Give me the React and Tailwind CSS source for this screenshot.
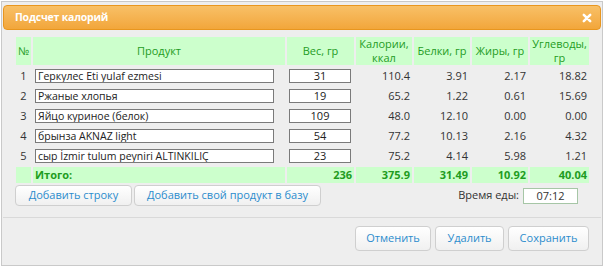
import React from "react";

const rows = [
  { n: 1, name: "Геркулес Eti yulaf ezmesi", w: "31", k: "110.4", b: "3.91", j: "2.17", u: "18.82" },
  { n: 2, name: "Ржаные хлопья", w: "19", k: "65.2", b: "1.22", j: "0.61", u: "15.69" },
  { n: 3, name: "Яйцо куриное (белок)", w: "109", k: "48.0", b: "12.10", j: "0.00", u: "0.00" },
  { n: 4, name: "брынза AKNAZ light", w: "54", k: "77.2", b: "10.13", j: "2.16", u: "4.32" },
  { n: 5, name: "сыр İzmir tulum peyniri ALTINKILIÇ", w: "23", k: "75.2", b: "4.14", j: "5.98", u: "1.21" },
];

const hdr = "bg-[#ccffcc] text-[#1f9c1f] text-[11px] leading-[14px] flex items-center justify-center text-center h-[28px]";
const num = "h-[18px] flex items-center justify-end pr-[2px] text-[11px] text-[#333]";
const tot = "h-[16px] bg-[#ccffcc] flex items-center justify-end pr-[2px] text-[11px] font-bold text-[#1f9c1f]";
const btn = "h-full rounded-[4px] border border-[#cfcfcf] bg-gradient-to-b from-white to-[#f0f0f0] text-[#2b8ccd] text-[11px] flex items-center justify-center";

export default function App() {
  return (
    <div className="w-[604px] h-[267px] bg-white p-px" style={{ fontFamily: '"Open Sans", "Noto Sans", sans-serif' }}>
      <div className="h-full border border-[#c9c9c9] bg-[#eeeeee] flex flex-col">
        <div className="mx-px mt-[3px] h-[25px] rounded-[4px] border border-[#e8961f] bg-gradient-to-b from-[#f8c066] to-[#f2a63a] flex items-center justify-between pl-[11px] pr-[8px]">
          <span className="text-white font-bold text-[10.5px] tracking-[-0.2px]">Подсчет калорий</span>
          <svg width="10" height="10" viewBox="0 0 10 10">
            <path d="M1.8 1.8 L8.2 8.2 M8.2 1.8 L1.8 8.2" stroke="white" strokeWidth="2.5" strokeLinecap="round" />
          </svg>
        </div>

        <div className="ml-[14px] mt-[7px] grid grid-cols-[15px_252px_67px_56px_56px_56px_59px] gap-[2px]">
          <div className={hdr}>№</div>
          <div className={hdr}>Продукт</div>
          <div className={hdr}>Вес, гр</div>
          <div className={hdr}>Калории,<br />ккал</div>
          <div className={hdr}>Белки, гр</div>
          <div className={hdr}>Жиры, гр</div>
          <div className={hdr}>Углеводы,<br />гр</div>

          {rows.map((r) => (
            <React.Fragment key={r.n}>
              <div className="h-[18px] flex items-center justify-center text-[11px] text-[#333]">{r.n}</div>
              <div className="h-[18px] flex items-center pl-[2px]">
                <div className="w-[239px] h-[14px] border border-[#7a7a7a] bg-white text-[10.5px] leading-[12px] text-[#222] pl-[2px] whitespace-nowrap overflow-hidden">{r.name}</div>
              </div>
              <div className="h-[18px] flex items-center pl-[2px]">
                <div className="w-[62px] h-[14px] border border-[#7a7a7a] bg-white text-[11px] leading-[12px] text-[#222] text-center">{r.w}</div>
              </div>
              <div className={num}>{r.k}</div>
              <div className={num}>{r.b}</div>
              <div className={num}>{r.j}</div>
              <div className={num}>{r.u}</div>
            </React.Fragment>
          ))}

          <div className="h-[16px] bg-[#ccffcc]" />
          <div className="h-[16px] bg-[#ccffcc] flex items-center pl-[2px] text-[11px] font-bold text-[#1f9c1f]">Итого:</div>
          <div className={tot}>236</div>
          <div className={tot}>375.9</div>
          <div className={tot}>31.49</div>
          <div className={tot}>10.92</div>
          <div className={tot}>40.04</div>
        </div>

        <div className="mt-[2px] h-[21px] flex items-center pl-[13px] pr-[24px]">
          <div className={btn + " w-[117px]"}>Добавить строку</div>
          <div className={btn + " w-[187px] ml-[2px]"}>Добавить свой продукт в базу</div>
          <div className="flex-1" />
          <span className="text-[11px] text-[#333] mr-[4px]">Время еды:</span>
          <div className="w-[55px] h-[16px] border border-[#a6c6a6] bg-white text-[11px] leading-[14px] text-[#333] text-center">07:12</div>
        </div>

        <div className="mx-px mt-[11px] border-t border-[#d9d9d9]" />

        <div className="mt-[8px] h-[25px] flex justify-end gap-[4px] pr-[13px]">
          <div className={btn + " w-[76px]"}>Отменить</div>
          <div className={btn + " w-[69px]"}>Удалить</div>
          <div className={btn + " w-[81px]"}>Сохранить</div>
        </div>
      </div>
    </div>
  );
}
